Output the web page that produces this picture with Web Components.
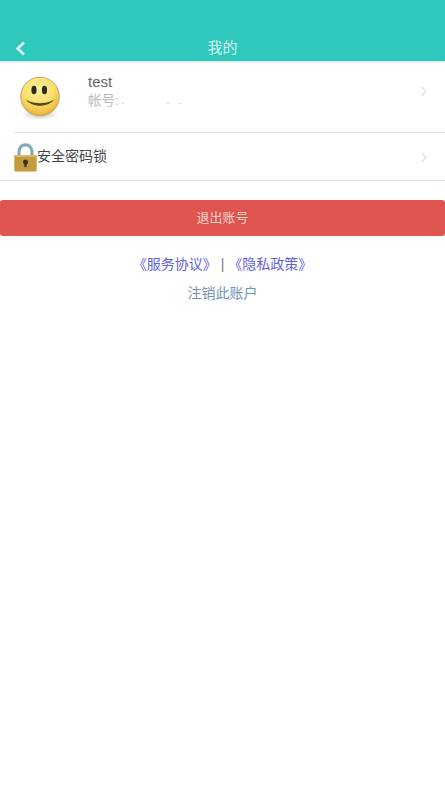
<!DOCTYPE html>
<html lang="zh">
<head>
<meta charset="utf-8">
<title>我的</title>
<style>
  html, body { margin: 0; padding: 0; background: #fff; }
  body { font-family: "Liberation Sans", "Noto Sans CJK SC", sans-serif; }
</style>
</head>
<body>
<app-page>
  <app-header title="我的"></app-header>
  <list-row inset tall>
    <smiley-icon slot="icon"></smiley-icon>
    <user-info name="test" account="帐号:"></user-info>
  </list-row>
  <list-row>
    <lock-icon slot="icon"></lock-icon>
    <span>安全密码锁</span>
  </list-row>
  <logout-button>退出账号</logout-button>
  <legal-links></legal-links>
</app-page>

<script>
// page column
class AppPage extends HTMLElement {
  constructor() {
    super();
    this.attachShadow({ mode: 'open' }).innerHTML = `
      <style>
        :host { display: flex; flex-direction: column; width: 445px; min-height: 795px; background: #fff; }
      </style>
      <slot></slot>`;
  }
}

class AppHeader extends HTMLElement {
  constructor() {
    super();
    this.attachShadow({ mode: 'open' }).innerHTML = `
      <style>
        :host {
          display: flex; align-items: center; justify-content: center;
          position: relative; z-index: 1; box-sizing: border-box;
          height: 61px; padding-top: 32px;
          background: #2ec8bc; box-shadow: 0 1px 2px rgba(120, 150, 150, .35);
          color: #d8f3ef; font-size: 15px;
        }
        svg { position: absolute; left: 15px; top: 41px; }
      </style>
      <svg width="11" height="15" viewBox="0 0 11 15">
        <path d="M9 1.5 L2.6 7.5 L9 13.5" fill="none" stroke="#dff7f3" stroke-width="2.6"/>
      </svg>
      <span>${this.getAttribute('title')}</span>`;
  }
}

class ListRow extends HTMLElement {
  constructor() {
    super();
    this.attachShadow({ mode: 'open' }).innerHTML = `
      <style>
        :host {
          display: flex; align-items: center; box-sizing: border-box;
          height: 48px; padding-right: 17px; padding-bottom: 3px;
          border-bottom: 1px solid #e2e2e2;
          color: #444; font-size: 14px;
        }
        :host([tall]) { height: 72px; margin-left: 14px; padding-bottom: 0; }
        :host([tall]) svg { margin: 0 0 10px; }
        .body { flex: 1; min-width: 0; }
        svg { flex: none; margin-top: 4px; }
      </style>
      <slot name="icon"></slot>
      <div class="body"><slot></slot></div>
      <svg width="8" height="13" viewBox="0 0 8 13">
        <path d="M1.8 1.8 L6 6.5 L1.8 11.2" fill="none" stroke="#dcdcdc" stroke-width="1.2"/>
      </svg>`;
  }
}

class SmileyIcon extends HTMLElement {
  constructor() {
    super();
    this.attachShadow({ mode: 'open' }).innerHTML = `
      <style>
        :host { display: block; flex: none; width: 74px; height: 48px; margin-top: 2px; }
        svg { display: block; margin-left: 5px; }
      </style>
      <svg width="44" height="48" viewBox="0 0 44 48">
        <defs>
          <radialGradient id="face" cx="45%" cy="30%" r="75%">
            <stop offset="0" stop-color="#fdf29c"/>
            <stop offset=".55" stop-color="#f9de6c"/>
            <stop offset="1" stop-color="#eaa92f"/>
          </radialGradient>
          <radialGradient id="shade">
            <stop offset="0" stop-color="#888" stop-opacity=".55"/>
            <stop offset="1" stop-color="#888" stop-opacity="0"/>
          </radialGradient>
        </defs>
        <ellipse cx="21" cy="40" rx="19" ry="6" fill="url(#shade)"/>
        <circle cx="21" cy="22.5" r="19.3" fill="url(#face)" stroke="#a89a63" stroke-width=".8"/>
        <ellipse cx="15" cy="16" rx="2.6" ry="4.3" fill="#2d2a1d"/>
        <ellipse cx="25.5" cy="16" rx="2.6" ry="4.3" fill="#2d2a1d"/>
        <path d="M6.5 25 C12 34 30 34 35.5 25 C30 30.5 12 30.5 6.5 25 Z" fill="#5a4a20"/>
      </svg>`;
  }
}

class LockIcon extends HTMLElement {
  constructor() {
    super();
    this.attachShadow({ mode: 'open' }).innerHTML = `
      <style>
        :host { display: block; flex: none; width: 23px; height: 29px; margin: 5px 0 0 14px; }
        svg { display: block; }
      </style>
      <svg width="23" height="29" viewBox="0 0 23 29">
        <path d="M5 14 V9 C5 -0.6 18 -0.6 18 9 V14" fill="none" stroke="#86a8bb" stroke-width="3.2"/>
        <rect x=".3" y="12" width="22.4" height="16.5" rx="1.5" fill="#c49c3d"/>
        <rect x=".3" y="12" width="22.4" height="2" fill="#d8b65a"/>
        <circle cx="11.5" cy="19" r="2.5" fill="#3a321c"/>
        <rect x="10.4" y="19" width="2.2" height="5" fill="#3a321c"/>
      </svg>`;
  }
}

class UserInfo extends HTMLElement {
  constructor() {
    super();
    this.attachShadow({ mode: 'open' }).innerHTML = `
      <style>
        :host { display: block; margin-bottom: 12px; }
        .name { font-size: 15px; line-height: 19px; color: #666; }
        .acct { display: flex; align-items: center; font-size: 13.5px; line-height: 19px; color: #bbb; }
        i { display: block; width: 2px; height: 1px; background: #d8d8d8; margin-top: 6px; }
      </style>
      <div class="name">${this.getAttribute('name')}</div>
      <div class="acct">${this.getAttribute('account')}
        <i style="margin-left:3px"></i><i style="margin-left:43px"></i><i style="margin-left:10px"></i>
      </div>`;
  }
}

class LogoutButton extends HTMLElement {
  constructor() {
    super();
    this.attachShadow({ mode: 'open' }).innerHTML = `
      <style>
        :host {
          display: flex; align-items: center; justify-content: center;
          box-sizing: border-box; height: 36px; margin-top: 19px; padding-bottom: 3px;
          border-radius: 3px; background: #df544f;
          color: #f7d3d0; font-size: 13px;
        }
      </style>
      <slot></slot>`;
  }
}

class LegalLinks extends HTMLElement {
  constructor() {
    super();
    this.attachShadow({ mode: 'open' }).innerHTML = `
      <style>
        :host {
          display: flex; flex-direction: column; align-items: center; gap: 9px;
          padding-top: 18px; font-size: 14px; line-height: 20px;
        }
        .terms { display: flex; gap: 4px; color: #6262dc; }
        .sep { color: #777; }
        .cancel { color: #7491b8; font-size: 14px; }
      </style>
      <div class="terms"><span>《服务协议》</span><span class="sep">|</span><span>《隐私政策》</span></div>
      <div class="cancel">注销此账户</div>`;
  }
}

customElements.define('app-page', AppPage);
customElements.define('app-header', AppHeader);
customElements.define('list-row', ListRow);
customElements.define('smiley-icon', SmileyIcon);
customElements.define('lock-icon', LockIcon);
customElements.define('user-info', UserInfo);
customElements.define('logout-button', LogoutButton);
customElements.define('legal-links', LegalLinks);
</script>
</body>
</html>
